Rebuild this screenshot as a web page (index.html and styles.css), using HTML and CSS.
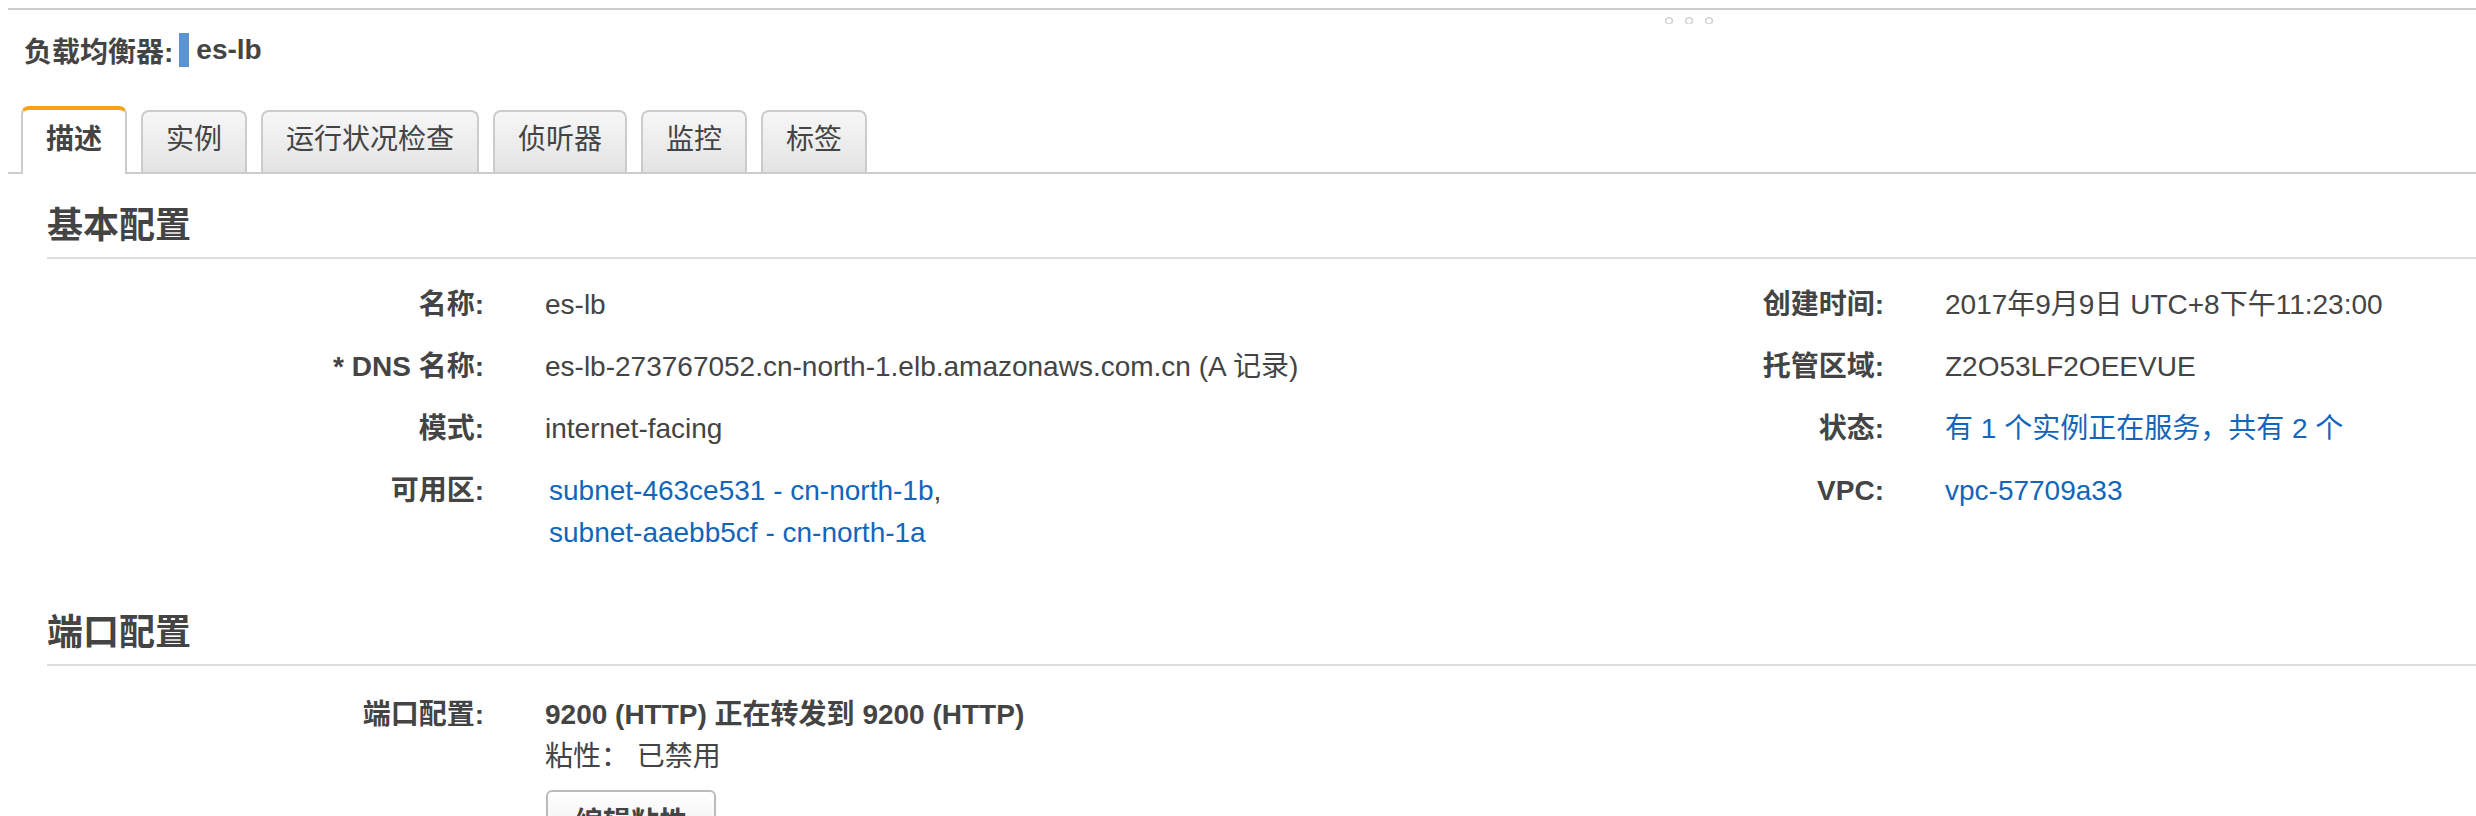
FILE: index.html
```html
<!DOCTYPE html>
<html lang="zh-CN">
<head>
<meta charset="utf-8">
<title>负载均衡器: es-lb</title>
<link rel="stylesheet" href="styles.css">
</head>
<body>
<div class="page">
  <div class="grip"><span></span><span></span><span></span></div>
  <div class="title">
    <span class="title-label">负载均衡器:</span>
    <span class="title-bar"></span>
    <span class="title-name">es-lb</span>
  </div>
  <div class="tabbar">
    <div class="tab active">描述</div>
    <div class="tab">实例</div>
    <div class="tab">运行状况检查</div>
    <div class="tab">侦听器</div>
    <div class="tab">监控</div>
    <div class="tab">标签</div>
  </div>
  <div class="content">
    <h2 class="section-title">基本配置</h2>
    <div class="grid">
      <div class="lbl">名称:</div>
      <div class="val">es-lb</div>
      <div class="lbl lbl-r">创建时间:</div>
      <div class="val val-r">2017年9月9日 UTC+8下午11:23:00</div>

      <div class="lbl">* DNS 名称:</div>
      <div class="val">es-lb-273767052.cn-north-1.elb.amazonaws.com.cn (A 记录)</div>
      <div class="lbl lbl-r">托管区域:</div>
      <div class="val val-r">Z2O53LF2OEEVUE</div>

      <div class="lbl">模式:</div>
      <div class="val">internet-facing</div>
      <div class="lbl lbl-r">状态:</div>
      <div class="val val-r"><a class="link">有 1 个实例正在服务，共有 2 个</a></div>

      <div class="lbl">可用区:</div>
      <div class="val"><div class="subnets"><div><a class="link">subnet-463ce531 - cn-north-1b</a>,</div><div><a class="link">subnet-aaebb5cf - cn-north-1a</a></div></div></div>
      <div class="lbl lbl-r">VPC:</div>
      <div class="val val-r"><a class="link">vpc-57709a33</a></div>
    </div>

    <h2 class="section-title second">端口配置</h2>
    <div class="grid grid-port">
      <div class="lbl">端口配置:</div>
      <div class="val">
        <div class="strong">9200 (HTTP) 正在转发到 9200 (HTTP)</div>
        <div>粘性： 已禁用</div>
        <button class="btn">编辑粘性</button>
      </div>
    </div>
  </div>
</div>
</body>
</html>
```

FILE: styles.css
```css
html, body {
  margin: 0;
  padding: 0;
  overflow: hidden;
  background: #fff;
}
body {
  font-family: "Liberation Sans", "Noto Sans CJK SC", sans-serif;
  color: #444;
  font-size: 28px;
}
.page {
  position: relative;
  margin: 8px 0 0 8px;
  border-top: 2px solid #ccc;
}
.grip {
  position: absolute;
  left: 1657px;
  top: 7px;
  display: flex;
  gap: 12px;
}
.grip span {
  width: 8px;
  height: 7px;
  border-radius: 50% 50% 35% 35%;
  background: radial-gradient(circle at 50% 55%, #fff 0 30%, #d0d0d0 60%, #c4c4c4 100%);
}
.title {
  display: flex;
  align-items: center;
  height: 80px;
  padding-left: 16px;
  font-weight: bold;
  font-size: 28px;
  color: #444;
}
.title-bar {
  width: 10px;
  height: 34px;
  background: #5a95d2;
  margin: 0 7px 0 6px;
}
.tabbar {
  display: flex;
  align-items: flex-end;
  gap: 14px;
  margin-top: 16px;
  padding-left: 13px;
  height: 66px;
  border-bottom: 2px solid #ccc;
}
.tab {
  border: 2px solid #ccc;
  border-bottom: none;
  border-radius: 8px 8px 0 0;
  padding: 0 23px 4px;
  line-height: 56px;
  font-size: 28px;
  color: #444;
  background: linear-gradient(#f7f7f7, #e3e3e3);
}
.tab.active {
  border-top: 4px solid #f7a11a;
  background: #fff;
  font-weight: bold;
  line-height: 60px;
  padding-bottom: 4px;
  margin-bottom: -2px;
}
.content {
  padding-left: 39px;
}
.section-title {
  margin: 31px 0 0;
  font-size: 36px;
  font-weight: bold;
  line-height: 42px;
  padding-bottom: 10px;
  border-bottom: 2px solid #ddd;
  color: #444;
}
.section-title.second {
  margin-top: 48px;
}
.grid {
  display: grid;
  grid-template-columns: 437px 1200px 200px 1fr;
  margin-top: 15px;
  line-height: 42px;
}
.grid-port {
  margin-top: 18px;
}
.lbl {
  text-align: right;
  font-weight: bold;
  padding: 10px 0;
  white-space: nowrap;
}
.val {
  padding: 10px 0 10px 61px;
  white-space: nowrap;
}
.link {
  color: #1166bb;
  text-decoration: none;
}
.subnets {
  padding-left: 4px;
}
.strong {
  font-weight: bold;
}
.btn {
  display: block;
  margin-top: 12px;
  margin-left: 1px;
  font-family: inherit;
  font-size: 28px;
  font-weight: bold;
  color: #444;
  line-height: 42px;
  padding: 10px 27px;
  border: 2px solid #bbb;
  border-radius: 6px;
  background: linear-gradient(#fff, #e8e8e8);
}
```
